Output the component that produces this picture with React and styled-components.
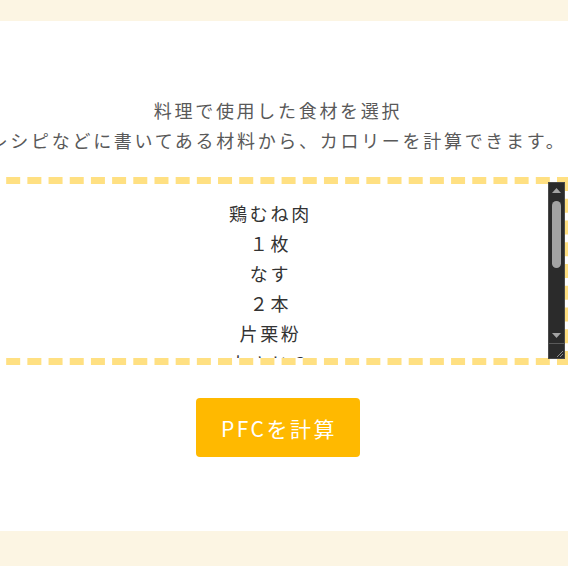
import React from "react";
import styled, { createGlobalStyle } from "styled-components";

const GlobalStyle = createGlobalStyle`
  html, body {
    margin: 0;
    padding: 0;
    background: #ffffff;
    overflow: hidden;
  }
  body {
    font-family: "Noto Sans CJK JP", "Noto Sans", sans-serif;
  }
`;

const Page = styled.div`
  display: flex;
  flex-direction: column;
  width: 568px;
  height: 566px;
`;

const Band = styled.div`
  height: ${(p) => p.$h}px;
  background: #fcf5e3;
  flex-shrink: 0;
`;

const Main = styled.main`
  display: flex;
  flex-direction: column;
  align-items: center;
  padding: 74px 12px 74px 0;
  overflow: hidden;
  background: #ffffff;
`;

const Intro = styled.div`
  display: flex;
  flex-direction: column;
  align-items: center;
  margin-bottom: 22px;
`;

const IntroLine = styled.p`
  margin: 0;
  white-space: nowrap;
  font-size: 18px;
  line-height: 30px;
  letter-spacing: 0.15em;
  color: #595959;
`;

const Frame = styled.div`
  position: relative;
  flex-shrink: 0;
  width: 586px;
  height: 188px;
`;

const Ingredients = styled.textarea`
  display: block;
  box-sizing: border-box;
  width: 100%;
  height: 100%;
  margin: 0;
  padding: 14px 25px 14px 10px;
  border: 7px dashed #ffe082;
  border-radius: 0;
  background: #ffffff;
  color: #333333;
  font-family: "Noto Sans CJK JP", "Noto Sans", sans-serif;
  font-size: 18px;
  line-height: 30px;
  letter-spacing: 0.15em;
  text-align: center;
  outline: none;
  resize: none;
  scrollbar-width: none;
`;

const ScrollBar = styled.div`
  position: absolute;
  top: 6px;
  right: 7px;
  bottom: 7px;
  width: 15px;
  display: flex;
  flex-direction: column;
  background: #2b2b2b;
  box-shadow: 0 0 0 1px #4a4a4a;
  pointer-events: none;
`;

const Arrow = styled.div`
  height: 15px;
  flex-shrink: 0;
  display: flex;
  align-items: center;
  justify-content: center;
  color: #a3a3a3;
`;

const Track = styled.div`
  flex: 1;
  display: flex;
  flex-direction: column;
  align-items: center;
  padding-top: 3px;
`;

const Thumb = styled.div`
  width: 9px;
  height: 67px;
  border-radius: 5px;
  background: #a3a3a3;
`;

const Grip = styled.div`
  height: 15px;
  flex-shrink: 0;
  box-sizing: border-box;
  border-top: 1px solid #5a5a5a;
  background: #2b2b2b;
  display: flex;
  align-items: flex-end;
  justify-content: flex-end;
`;

const Triangle = ({ up }) => (
  <svg width="9" height="5" viewBox="0 0 9 5">
    <polygon
      points={up ? "0,5 9,5 4.5,0" : "0,0 9,0 4.5,5"}
      fill="currentColor"
    />
  </svg>
);

const CalcButton = styled.button`
  margin-top: 33px;
  height: 59px;
  padding: 0 23px 0 25px;
  border: none;
  border-radius: 4px;
  background: #ffb900;
  color: #ffffff;
  font-family: "Noto Sans CJK JP", "Noto Sans", sans-serif;
  font-size: 21px;
  letter-spacing: 0.12em;
  cursor: pointer;
`;

const recipe = [
  "鶏むね肉",
  "１枚",
  "なす",
  "２本",
  "片栗粉",
  "大さじ２",
  "しょうゆ",
  "大さじ１",
  "砂糖",
  "小さじ１",
  "サラダ油",
  "大さじ１",
].join("\n");

export default function App() {
  return (
    <>
      <GlobalStyle />
      <Page>
        <Band $h={21} />
        <Main>
          <Intro>
            <IntroLine>料理で使用した食材を選択</IntroLine>
            <IntroLine>レシピなどに書いてある材料から、カロリーを計算できます。</IntroLine>
          </Intro>
          <Frame>
            <Ingredients defaultValue={recipe} />
            <ScrollBar aria-hidden="true">
              <Arrow>
                <Triangle up />
              </Arrow>
              <Track>
                <Thumb />
              </Track>
              <Arrow>
                <Triangle />
              </Arrow>
              <Grip>
                <svg width="8" height="8" viewBox="0 0 8 8">
                  <line x1="1" y1="7" x2="7" y2="1" stroke="#8a8a8a" strokeWidth="1" />
                  <line x1="4" y1="7" x2="7" y2="4" stroke="#8a8a8a" strokeWidth="1" />
                </svg>
              </Grip>
            </ScrollBar>
          </Frame>
          <CalcButton type="button">PFCを計算</CalcButton>
        </Main>
        <Band $h={35} />
      </Page>
    </>
  );
}
